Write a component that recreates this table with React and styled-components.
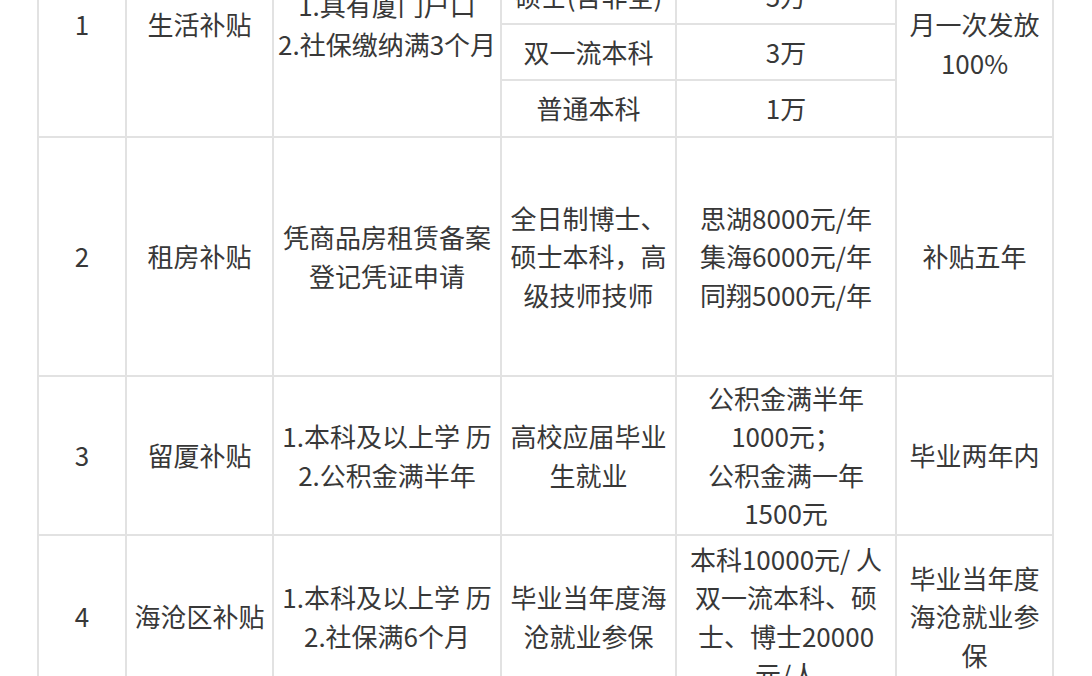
import React from 'react';
import styled, { createGlobalStyle } from 'styled-components';

const Global = createGlobalStyle`
  html, body { margin: 0; padding: 0; background: #fff; }
  body {
    font-family: "Noto Sans CJK SC", "Noto Sans", sans-serif;
    color: #383838;
    overflow: hidden;
  }
`;

const Page = styled.div`
  width: 1092px;
  height: 676px;
  overflow: hidden;
  padding-left: 37px;
  box-sizing: border-box;
  background: #fff;
`;

const Table = styled.table`
  border-collapse: collapse;
  table-layout: fixed;
  width: 1017px;
  margin-top: -89px;
  font-size: 26px;
  line-height: 38.5px;
`;

const Col = styled.col`
  width: ${p => p.$w}px;
`;

const Row = styled.tr`
  height: ${p => p.$h}px;
`;

const Cell = styled.td`
  border: 2px solid #e2e2e2;
  text-align: center;
  vertical-align: middle;
  padding: 0 4px;
  white-space: nowrap;
  overflow: hidden;
`;

const Line = styled.div`
  display: block;
`;

const cols = [88, 147, 228, 175, 220, 157];

const Lines = ({ items }) => items.map((t, i) => <Line key={i}>{t}</Line>);

export default function App() {
  return (
    <Page>
      <Global />
      <Table>
        <colgroup>
          {cols.map((w, i) => <Col key={i} $w={w} />)}
        </colgroup>
        <tbody>
          <Row $h={56}>
            <Cell rowSpan={4}>1</Cell>
            <Cell rowSpan={4}>生活补贴</Cell>
            <Cell rowSpan={4}><Lines items={['1.具有厦门户口', '2.社保缴纳满3个月']} /></Cell>
            <Cell>博士</Cell>
            <Cell>10万</Cell>
            <Cell rowSpan={4}><Lines items={['入职满一个', '月一次发放', '100%']} /></Cell>
          </Row>
          <Row $h={56}>
            <Cell>硕士(含非全)</Cell>
            <Cell>5万</Cell>
          </Row>
          <Row $h={56}>
            <Cell>双一流本科</Cell>
            <Cell>3万</Cell>
          </Row>
          <Row $h={57}>
            <Cell>普通本科</Cell>
            <Cell>1万</Cell>
          </Row>
          <Row $h={239}>
            <Cell>2</Cell>
            <Cell>租房补贴</Cell>
            <Cell><Lines items={['凭商品房租赁备案', '登记凭证申请']} /></Cell>
            <Cell><Lines items={['全日制博士、', '硕士本科，高', '级技师技师']} /></Cell>
            <Cell><Lines items={['思湖8000元/年', '集海6000元/年', '同翔5000元/年']} /></Cell>
            <Cell>补贴五年</Cell>
          </Row>
          <Row $h={159}>
            <Cell>3</Cell>
            <Cell>留厦补贴</Cell>
            <Cell><Lines items={['1.本科及以上学 历', '2.公积金满半年']} /></Cell>
            <Cell><Lines items={['高校应届毕业', '生就业']} /></Cell>
            <Cell><Lines items={['公积金满半年', '1000元；', '公积金满一年', '1500元']} /></Cell>
            <Cell>毕业两年内</Cell>
          </Row>
          <Row $h={163}>
            <Cell>4</Cell>
            <Cell>海沧区补贴</Cell>
            <Cell><Lines items={['1.本科及以上学 历', '2.社保满6个月']} /></Cell>
            <Cell><Lines items={['毕业当年度海', '沧就业参保']} /></Cell>
            <Cell><Lines items={['本科10000元/ 人', '双一流本科、硕', '士、博士20000', '元/人']} /></Cell>
            <Cell><Lines items={['毕业当年度', '海沧就业参', '保']} /></Cell>
          </Row>
        </tbody>
      </Table>
    </Page>
  );
}
